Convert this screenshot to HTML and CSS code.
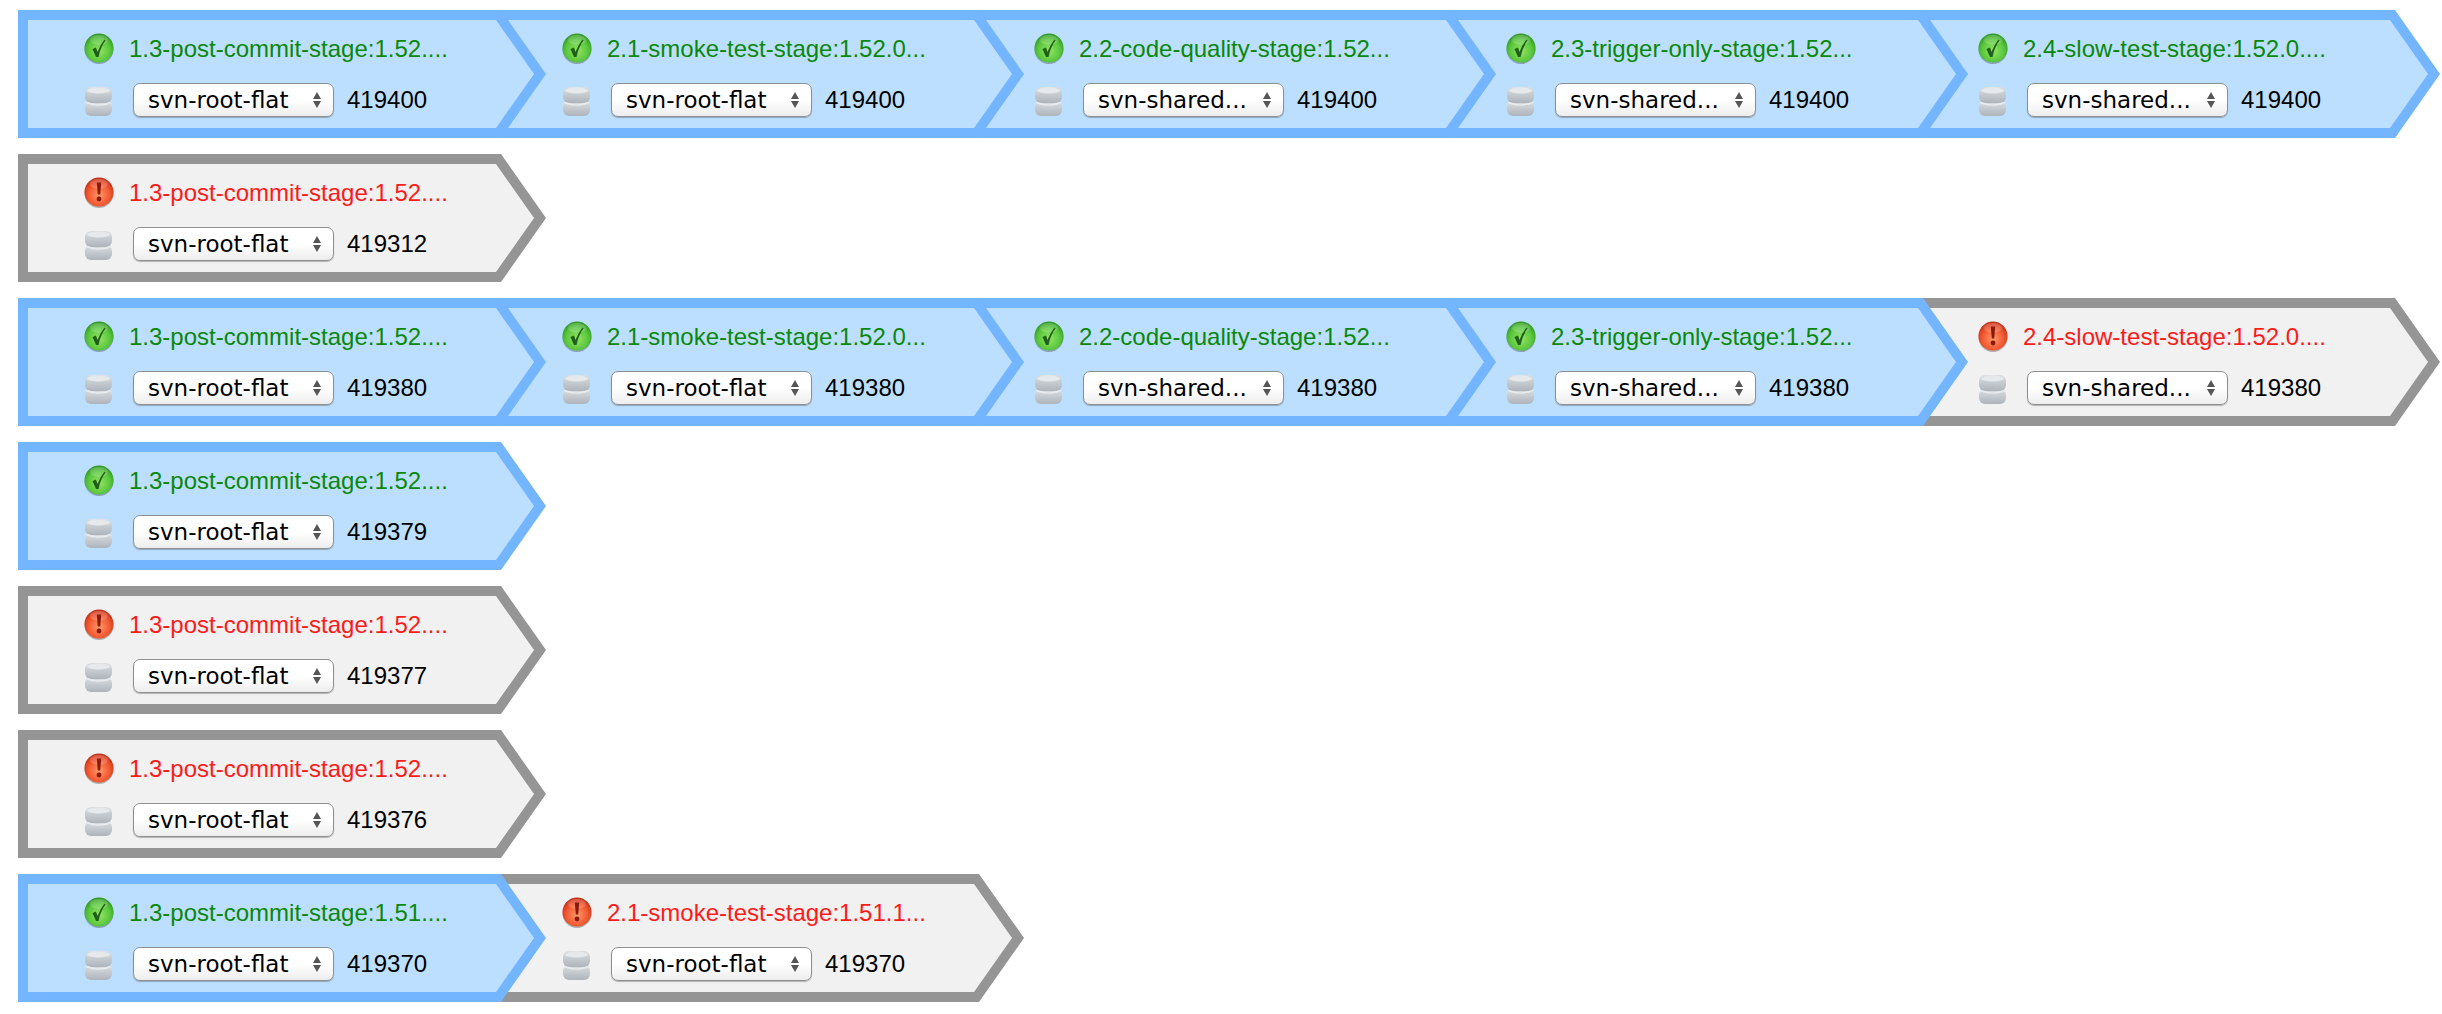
FILE: index.html
```html
<!DOCTYPE html>
<html lang="en">

<head>
    <meta charset="utf-8">
    <title>Pipeline</title>
    <link rel="stylesheet" href="styles.css">
</head>

<body>
    <svg class="icon-defs" width="0" height="0">
        <defs>
            <radialGradient id="gradOk" cx="50%" cy="60%" r="60%">
                <stop offset="0" stop-color="#96e468"/>
                <stop offset="0.65" stop-color="#58c63a"/>
                <stop offset="1" stop-color="#2c9426"/>
            </radialGradient>
            <radialGradient id="gradFail" cx="50%" cy="60%" r="60%">
                <stop offset="0" stop-color="#ff9a6a"/>
                <stop offset="0.65" stop-color="#f0552e"/>
                <stop offset="1" stop-color="#c02c16"/>
            </radialGradient>
            <linearGradient id="gradDb" x1="0" y1="0" x2="0" y2="1">
                <stop offset="0" stop-color="#dcdfe2"/>
                <stop offset="1" stop-color="#adb4ba"/>
            </linearGradient>
            <symbol id="iconOk" viewBox="0 0 30 32">
                <circle cx="15" cy="16.5" r="14.5" fill="#000" opacity="0.28"/>
                <circle cx="15" cy="15" r="14.5" fill="url(#gradOk)"/>
                <ellipse cx="15" cy="7" rx="9" ry="5" fill="#fff" opacity="0.18"/>
                <path d="M8.5 16 L12 14.5 L13.5 19 Q16 12 20.5 6.5 L21.5 7.5 Q16.5 14 14.5 24 L12 24 Z" fill="#1f5f18"/>
            </symbol>
            <symbol id="iconFail" viewBox="0 0 30 32">
                <circle cx="15" cy="16.5" r="14.5" fill="#000" opacity="0.28"/>
                <circle cx="15" cy="15" r="14.5" fill="url(#gradFail)"/>
                <ellipse cx="15" cy="7" rx="9" ry="5" fill="#fff" opacity="0.18"/>
                <path d="M12.8 5.5 H17.2 L16.2 17.5 H13.8 Z" fill="#8c1a0c"/>
                <circle cx="15" cy="22" r="2.4" fill="#8c1a0c"/>
            </symbol>
            <symbol id="iconDb" viewBox="0 0 30 32">
                <rect x="1" y="17" width="27" height="15" rx="6" fill="url(#gradDb)"/>
                <rect x="1" y="3" width="27" height="16" rx="6" fill="url(#gradDb)"/>
                <path d="M2 18.5 Q14.5 23.5 27 18.5" fill="none" stroke="#e8ebed" stroke-width="1.5"/>
                <ellipse cx="14.5" cy="6.5" rx="11.5" ry="3" fill="#e6e9eb"/>
            </symbol>
        </defs>
    </svg>

    <div class="pipeline">
        <div class="stage passed"><div class="stage-fill">
            <div class="stage-head"><svg class="status-icon"><use href="#iconOk"/></svg><a class="stage-name">1.3-post-commit-stage:1.52....</a></div>
            <div class="stage-rev"><svg class="status-icon"><use href="#iconDb"/></svg><span class="select-box"><select><option>svn-root-flat</option></select></span><span class="rev-num">419400</span></div>
        </div></div>
        <div class="stage passed"><div class="stage-fill">
            <div class="stage-head"><svg class="status-icon"><use href="#iconOk"/></svg><a class="stage-name">2.1-smoke-test-stage:1.52.0...</a></div>
            <div class="stage-rev"><svg class="status-icon"><use href="#iconDb"/></svg><span class="select-box"><select><option>svn-root-flat</option></select></span><span class="rev-num">419400</span></div>
        </div></div>
        <div class="stage passed"><div class="stage-fill">
            <div class="stage-head"><svg class="status-icon"><use href="#iconOk"/></svg><a class="stage-name">2.2-code-quality-stage:1.52...</a></div>
            <div class="stage-rev"><svg class="status-icon"><use href="#iconDb"/></svg><span class="select-box"><select><option>svn-shared...</option></select></span><span class="rev-num">419400</span></div>
        </div></div>
        <div class="stage passed"><div class="stage-fill">
            <div class="stage-head"><svg class="status-icon"><use href="#iconOk"/></svg><a class="stage-name">2.3-trigger-only-stage:1.52...</a></div>
            <div class="stage-rev"><svg class="status-icon"><use href="#iconDb"/></svg><span class="select-box"><select><option>svn-shared...</option></select></span><span class="rev-num">419400</span></div>
        </div></div>
        <div class="stage passed"><div class="stage-fill">
            <div class="stage-head"><svg class="status-icon"><use href="#iconOk"/></svg><a class="stage-name">2.4-slow-test-stage:1.52.0....</a></div>
            <div class="stage-rev"><svg class="status-icon"><use href="#iconDb"/></svg><span class="select-box"><select><option>svn-shared...</option></select></span><span class="rev-num">419400</span></div>
        </div></div>
    </div>

    <div class="pipeline">
        <div class="stage failed"><div class="stage-fill">
            <div class="stage-head"><svg class="status-icon"><use href="#iconFail"/></svg><a class="stage-name">1.3-post-commit-stage:1.52....</a></div>
            <div class="stage-rev"><svg class="status-icon"><use href="#iconDb"/></svg><span class="select-box"><select><option>svn-root-flat</option></select></span><span class="rev-num">419312</span></div>
        </div></div>
    </div>

    <div class="pipeline">
        <div class="stage passed"><div class="stage-fill">
            <div class="stage-head"><svg class="status-icon"><use href="#iconOk"/></svg><a class="stage-name">1.3-post-commit-stage:1.52....</a></div>
            <div class="stage-rev"><svg class="status-icon"><use href="#iconDb"/></svg><span class="select-box"><select><option>svn-root-flat</option></select></span><span class="rev-num">419380</span></div>
        </div></div>
        <div class="stage passed"><div class="stage-fill">
            <div class="stage-head"><svg class="status-icon"><use href="#iconOk"/></svg><a class="stage-name">2.1-smoke-test-stage:1.52.0...</a></div>
            <div class="stage-rev"><svg class="status-icon"><use href="#iconDb"/></svg><span class="select-box"><select><option>svn-root-flat</option></select></span><span class="rev-num">419380</span></div>
        </div></div>
        <div class="stage passed"><div class="stage-fill">
            <div class="stage-head"><svg class="status-icon"><use href="#iconOk"/></svg><a class="stage-name">2.2-code-quality-stage:1.52...</a></div>
            <div class="stage-rev"><svg class="status-icon"><use href="#iconDb"/></svg><span class="select-box"><select><option>svn-shared...</option></select></span><span class="rev-num">419380</span></div>
        </div></div>
        <div class="stage passed"><div class="stage-fill">
            <div class="stage-head"><svg class="status-icon"><use href="#iconOk"/></svg><a class="stage-name">2.3-trigger-only-stage:1.52...</a></div>
            <div class="stage-rev"><svg class="status-icon"><use href="#iconDb"/></svg><span class="select-box"><select><option>svn-shared...</option></select></span><span class="rev-num">419380</span></div>
        </div></div>
        <div class="stage failed"><div class="stage-fill">
            <div class="stage-head"><svg class="status-icon"><use href="#iconFail"/></svg><a class="stage-name">2.4-slow-test-stage:1.52.0....</a></div>
            <div class="stage-rev"><svg class="status-icon"><use href="#iconDb"/></svg><span class="select-box"><select><option>svn-shared...</option></select></span><span class="rev-num">419380</span></div>
        </div></div>
    </div>

    <div class="pipeline">
        <div class="stage passed"><div class="stage-fill">
            <div class="stage-head"><svg class="status-icon"><use href="#iconOk"/></svg><a class="stage-name">1.3-post-commit-stage:1.52....</a></div>
            <div class="stage-rev"><svg class="status-icon"><use href="#iconDb"/></svg><span class="select-box"><select><option>svn-root-flat</option></select></span><span class="rev-num">419379</span></div>
        </div></div>
    </div>

    <div class="pipeline">
        <div class="stage failed"><div class="stage-fill">
            <div class="stage-head"><svg class="status-icon"><use href="#iconFail"/></svg><a class="stage-name">1.3-post-commit-stage:1.52....</a></div>
            <div class="stage-rev"><svg class="status-icon"><use href="#iconDb"/></svg><span class="select-box"><select><option>svn-root-flat</option></select></span><span class="rev-num">419377</span></div>
        </div></div>
    </div>

    <div class="pipeline">
        <div class="stage failed"><div class="stage-fill">
            <div class="stage-head"><svg class="status-icon"><use href="#iconFail"/></svg><a class="stage-name">1.3-post-commit-stage:1.52....</a></div>
            <div class="stage-rev"><svg class="status-icon"><use href="#iconDb"/></svg><span class="select-box"><select><option>svn-root-flat</option></select></span><span class="rev-num">419376</span></div>
        </div></div>
    </div>

    <div class="pipeline">
        <div class="stage passed"><div class="stage-fill">
            <div class="stage-head"><svg class="status-icon"><use href="#iconOk"/></svg><a class="stage-name">1.3-post-commit-stage:1.51....</a></div>
            <div class="stage-rev"><svg class="status-icon"><use href="#iconDb"/></svg><span class="select-box"><select><option>svn-root-flat</option></select></span><span class="rev-num">419370</span></div>
        </div></div>
        <div class="stage failed"><div class="stage-fill">
            <div class="stage-head"><svg class="status-icon"><use href="#iconFail"/></svg><a class="stage-name">2.1-smoke-test-stage:1.51.1...</a></div>
            <div class="stage-rev"><svg class="status-icon"><use href="#iconDb"/></svg><span class="select-box"><select><option>svn-root-flat</option></select></span><span class="rev-num">419370</span></div>
        </div></div>
    </div>
</body>

</html>
```

FILE: styles.css
```css
* {
    margin: 0;
    padding: 0;
    box-sizing: border-box;
}

html,
body {
    overflow: hidden;
}

body {
    font-family: "Liberation Sans", Arial, sans-serif;
    background: #ffffff;
    color: #000000;
    padding: 10px 0 0 18px;
}

.icon-defs {
    display: block;
    height: 0;
}

.pipeline {
    display: flex;
    height: 128px;
    margin-bottom: 16px;
}

.stage {
    flex: none;
    width: 528px;
    height: 128px;
    padding: 10px;
    margin-left: -56px;
    clip-path: polygon(0 0, 483px 0, 528px 64px, 483px 128px, 0 128px);
}

.stage:first-child {
    margin-left: 0;
}

.stage:nth-child(2) {
    margin-left: -50px;
}

/* earlier stages sit on top so the arrow tip covers the next one */
.stage:nth-child(1) { z-index: 5; }
.stage:nth-child(2) { z-index: 4; }
.stage:nth-child(3) { z-index: 3; }
.stage:nth-child(4) { z-index: 2; }
.stage:nth-child(5) { z-index: 1; }

.stage.passed {
    background: #74b5ff;
}

.stage.failed {
    background: #959595;
}

.stage-fill {
    width: 506px;
    height: 108px;
    padding: 13px 0 0 56px;
    clip-path: polygon(0 0, 468px 0, 506px 54px, 468px 108px, 0 108px);
}

.passed .stage-fill {
    background: #bddfff;
}

.failed .stage-fill {
    background: #f1f1f1;
}

.stage-head {
    display: flex;
    align-items: center;
    height: 32px;
    margin-bottom: 18px;
}

.status-icon {
    flex: none;
    width: 30px;
    height: 32px;
}

.stage-name {
    margin-left: 15px;
    font-size: 24px;
    white-space: nowrap;
}

.passed .stage-name {
    color: #0a880a;
}

.failed .stage-name {
    color: #ff1a1a;
}

.stage-rev {
    display: flex;
    align-items: center;
    height: 34px;
}

.select-box {
    position: relative;
    display: block;
    width: 201px;
    height: 34px;
    margin-left: 19px;
}

.select-box select {
    display: block;
    width: 100%;
    height: 100%;
    appearance: none;
    border: 1px solid #8f8f8f;
    border-radius: 7px;
    background: linear-gradient(#ffffff, #ffffff 50%, #ededed);
    box-shadow: 0 1px 1px rgba(0, 0, 0, 0.25);
    padding: 0 24px 0 14px;
    font-family: "DejaVu Sans", sans-serif;
    font-size: 23px;
    color: #000000;
}

/* the up and down arrows of the select */
.select-box::before,
.select-box::after {
    content: "";
    position: absolute;
    right: 13px;
    border-left: 4.5px solid transparent;
    border-right: 4.5px solid transparent;
}

.select-box::before {
    top: 9px;
    border-bottom: 7px solid #555555;
}

.select-box::after {
    bottom: 9px;
    border-top: 7px solid #555555;
}

.rev-num {
    margin-left: 13px;
    font-size: 24px;
}
```
